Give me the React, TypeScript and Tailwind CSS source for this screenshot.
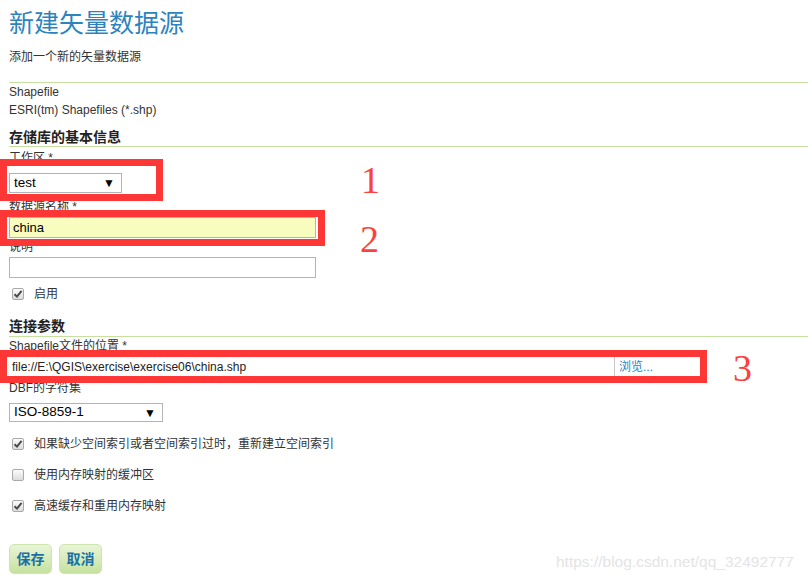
import React from "react";

const FONT = { fontFamily: '"Liberation Sans", "Noto Sans CJK SC", sans-serif' };

function CheckBox({ checked }: { checked: boolean }) {
  return (
    <span className="flex h-[12px] w-[12px] items-center justify-center rounded-[2px] border border-[#a9a9a9] bg-gradient-to-b from-[#fcfcfc] to-[#dcdcdc]">
      {checked && (
        <svg width="10" height="10" viewBox="0 0 10 10">
          <path d="M1.5 5.2 L4 7.6 L8.6 1.8" fill="none" stroke="#4a4a4a" strokeWidth="2" />
        </svg>
      )}
    </span>
  );
}

function CheckRow({ checked, label, className }: { checked: boolean; label: string; className: string }) {
  return (
    <div className={`flex h-[18px] items-center ${className}`}>
      <span className="ml-[3px]">
        <CheckBox checked={checked} />
      </span>
      <span className="ml-[10px] text-[12px] leading-[18px] text-[#333]">{label}</span>
    </div>
  );
}

function Select({ value, width, className }: { value: string; width: string; className: string }) {
  return (
    <div className={`flex items-center justify-between border border-[#b4b4b4] bg-white pl-[4px] pr-[6px] ${width} ${className}`}>
      <span className="text-[13.5px] text-black">{value}</span>
      <span className="text-[12px] leading-none text-black">▼</span>
    </div>
  );
}

function Label({ text, className = "" }: { text: string; className?: string }) {
  return <div className={`h-[18px] text-[12px] leading-[18px] text-[#333] ${className}`}>{text}</div>;
}

export default function App() {
  return (
    <div className="relative h-[580px] w-[808px] overflow-hidden bg-white" style={FONT}>
      <div className="pl-[9px]">
        <h1 className="pt-[7px] text-[25px] font-normal leading-[32px] text-[#2e83bd]">新建矢量数据源</h1>
        <p className="mt-[10px] text-[12px] leading-[16px] text-[#333]">添加一个新的矢量数据源</p>
        <div className="mt-[17px] h-px bg-[#c6e09f]" />

        <div className="text-[12px] leading-[18px] text-[#333]">Shapefile</div>
        <div className="text-[12px] leading-[18px] text-[#333]">ESRI(tm) Shapefiles (*.shp)</div>

        <h2 className="mt-[9px] text-[14px] font-bold leading-[18px] text-[#222]">存储库的基本信息</h2>
        <div className="h-px bg-[#c6e09f]" />

        <Label text="工作区 *" className="mt-[2px]" />
        <Select value="test" width="w-[113px]" className="mt-[6px] h-[20px]" />

        <Label text="数据源名称 *" className="mt-[5px]" />
        <div className="mt-px flex h-[21px] w-[307px] items-center border border-[#b4b4b4] bg-[#f8fcbf] pl-[3px] text-[13px] text-black">
          china
        </div>

        <Label text="说明" />
        <div className="mt-px h-[21px] w-[307px] border border-[#b4b4b4] bg-white" />

        <div className="mt-[7px] flex h-[18px] items-center">
          <span className="ml-[3px]">
            <CheckBox checked />
          </span>
          <span className="ml-[10px] text-[12px] text-[#333]">启用</span>
        </div>

        <h2 className="mt-[14px] text-[14px] font-bold leading-[18px] text-[#222]">连接参数</h2>
        <div className="mt-px h-px bg-[#c6e09f]" />

        <Label text="Shapefile文件的位置 *" />
        <div className="mt-[2px] flex h-[19px] w-[691px] items-center bg-white">
          <span className="flex-1 pl-[3px] text-[12px] text-[#222]">file://E:\QGIS\exercise\exercise06\china.shp</span>
          <span className="h-full w-px bg-[#c8c8c8]" />
          <span className="w-[85px] pl-[4px] text-[12px] text-[#2b7fbf]">浏览...</span>
        </div>

        <Label text="DBF的字符集" className="mt-[3px]" />
        <Select value="ISO-8859-1" width="w-[154px]" className="mt-[6px] h-[19px]" />

        <CheckRow checked label="如果缺少空间索引或者空间索引过时，重新建立空间索引" className="mt-[13px]" />
        <CheckRow checked={false} label="使用内存映射的缓冲区" className="mt-[13px]" />
        <CheckRow checked label="高速缓存和重用内存映射" className="mt-[13px]" />

        <div className="mt-[29px] flex gap-[7px]">
          <button className="h-[30px] w-[43px] rounded-[5px] border border-[#cde5ad] bg-gradient-to-b from-[#e8f5d8] to-[#c5e29e] text-[14px] font-bold text-[#1d6fa5]">
            保存
          </button>
          <button className="h-[30px] w-[43px] rounded-[5px] border border-[#cde5ad] bg-gradient-to-b from-[#e8f5d8] to-[#c5e29e] text-[14px] font-bold text-[#1d6fa5]">
            取消
          </button>
        </div>
      </div>

      {/* red annotation boxes */}
      <div className="absolute left-0 top-[159px] h-[42px] w-[163px] border-[7px] border-[#fd3636]" />
      <div className="absolute left-0 top-[210px] h-[36px] w-[325px] border-[7px] border-[#fd3636]" />
      <div className="absolute left-0 top-[350px] h-[33px] w-[707px] border-[7px] border-[#fd3636]" />

      <span className="absolute left-[361px] top-[158px] text-[38px] leading-[44px] text-[#fd4040]" style={{ fontFamily: '"Liberation Serif", serif' }}>1</span>
      <span className="absolute left-[360px] top-[217px] text-[38px] leading-[44px] text-[#fd4040]" style={{ fontFamily: '"Liberation Serif", serif' }}>2</span>
      <span className="absolute left-[733px] top-[346px] text-[38px] leading-[44px] text-[#fd4040]" style={{ fontFamily: '"Liberation Serif", serif' }}>3</span>

      <span className="absolute left-[556px] top-[552px] text-[15.5px] leading-[20px] text-[#e4e4e4]">https://blog.csdn.net/qq_32492777</span>
    </div>
  );
}
